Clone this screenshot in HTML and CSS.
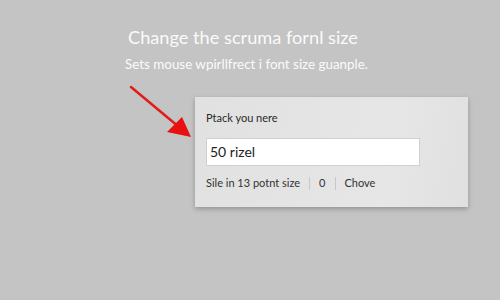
FILE: index.html
```html
<!DOCTYPE html>
<html>
<head>
<meta charset="utf-8">
<link rel="stylesheet" href="styles.css">
</head>
<body>
<main class="page">
  <header class="intro">
    <h1 class="title">Change the scruma fornl size</h1>
    <p class="subtitle">Sets mouse wpirllfrect i font size guanple.</p>
  </header>
  <section class="stage">
    <svg class="arrow" width="80" height="70" viewBox="0 0 80 70">
      <line x1="2" y1="2" x2="50" y2="42" stroke="#e21c1c" stroke-width="2.5" stroke-linecap="round"/>
      <polygon points="62,52 38,47 53,32" fill="#e81010"/>
    </svg>
    <div class="panel">
      <div class="label">Ptack you nere</div>
      <div class="input">50 rizel</div>
      <div class="meta">
        <span>Sile in 13 potnt size</span>
        <span class="sep"></span>
        <span>0</span>
        <span class="sep"></span>
        <span>Chove</span>
      </div>
    </div>
  </section>
</main>
</body>
</html>
```
FILE: styles.css
```css
html, body {
  margin: 0;
  padding: 0;
}
body {
  width: 500px;
  height: 300px;
  background: #c4c4c4;
  font-family: Lato, "Open Sans", sans-serif;
  overflow: hidden;
}
.page {
  position: relative;
  height: 300px;
}
.intro {
  padding-top: 24px;
  padding-right: 14px;
  text-align: center;
  color: #fafafa;
}
.title {
  margin: 0;
  font-weight: 400;
  font-size: 18.2px;
  line-height: 26px;
}
.subtitle {
  margin: 4px 0 0;
  padding-left: 7px;
  font-size: 13.4px;
  line-height: 20px;
  color: #fbfbfb;
}
.stage {
  position: relative;
  padding-top: 23px;
  padding-left: 195px;
}
.arrow {
  position: absolute;
  left: 129px;
  top: 11px;
}
.panel {
  width: 273px;
  height: 110px;
  box-sizing: border-box;
  background: linear-gradient(100deg, #e1e1e1, #e6e6e6 70%, #e0e0e0);
  box-shadow: 0 2px 5px rgba(0,0,0,0.25);
  padding: 13px 10px 0 11px;
}
.label {
  font-size: 11px;
  line-height: 16px;
  color: #2a2a2a;
}
.input {
  margin-top: 12px;
  width: 214px;
  height: 28px;
  box-sizing: border-box;
  background: #ffffff;
  border: 1px solid #d0d0d0;
  padding-left: 3px;
  font-size: 14px;
  line-height: 26px;
  color: #222;
}
.meta {
  margin-top: 9px;
  display: flex;
  align-items: center;
  gap: 9px;
  font-size: 11px;
  line-height: 16px;
  color: #333;
}
.sep {
  width: 1px;
  height: 13px;
  background: #c8c8c8;
}
```
